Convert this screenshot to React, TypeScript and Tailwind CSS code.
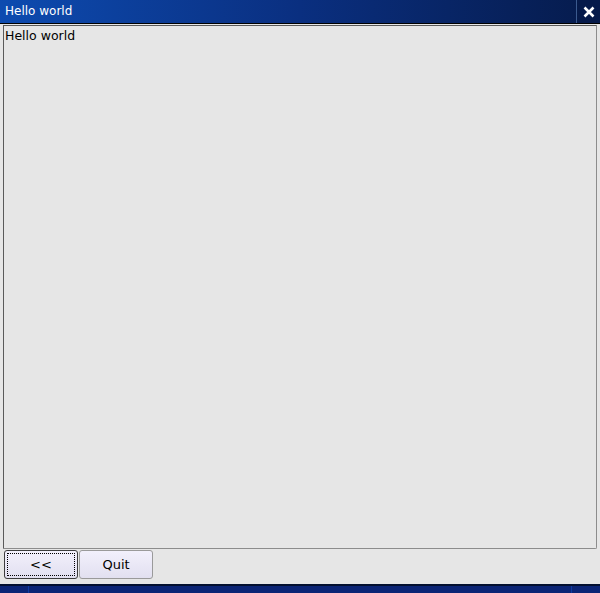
export default function App() {
  return (
    <div className="w-[600px] h-[593px] bg-[#e6e6e6] flex flex-col overflow-hidden font-['DejaVu_Sans',sans-serif] text-[12px]">
      {/* title bar */}
      <div className="h-[24px] flex border-b border-black bg-gradient-to-r from-[#0d4bb0] via-[#0a2f80] to-[#061b4c]">
        <div className="flex-1 text-white pl-[5px] leading-[23px] text-[12px]">Hello world</div>
        <div className="w-[24px] flex items-center justify-center border-l border-[#3b5a8f] bg-[#061a4a]">
          <svg width="12" height="12" viewBox="0 0 12 12">
            <path d="M1.5 1.5 L10.5 10.5 M10.5 1.5 L1.5 10.5" stroke="white" strokeWidth="2.6" />
          </svg>
        </div>
      </div>

      {/* text area */}
      <div className="flex-1 mt-[1px] ml-[3px] mr-[3px] border border-[#8c8c8c] border-l-[#5a5a5a] border-t-[#5a5a5a] rounded-br-[2px] pl-[1px] pt-[2px] text-black leading-[15px] text-[12.5px]">
        Hello world
      </div>

      {/* buttons */}
      <div className="flex gap-[1px] pl-[4px] pt-[1px] h-[35px]">
        <button className="w-[74px] h-[29px] rounded-[3px] border border-[#3c3c3c] bg-gradient-to-b from-[#f2f0fc] to-[#e2e0f0] p-[2px]">
          <div className="w-full h-full border border-dotted border-black flex items-center justify-center text-[13px] text-black">&lt;&lt;</div>
        </button>
        <button className="w-[74px] h-[29px] rounded-[3px] border border-[#9a9a9a] bg-gradient-to-b from-[#f2f0fc] to-[#e2e0f0] flex items-center justify-center text-[13px] text-black">
          Quit
        </button>
      </div>

      {/* taskbar */}
      <div className="h-[9px] flex border-t-2 border-[#031030] bg-[#0b2475]">
        <div className="w-[29px] border-r border-[#0e3aa0]" />
        <div className="flex-1 border-r border-[#0e3aa0]" />
        <div className="w-[28px]" />
      </div>
    </div>
  );
}
